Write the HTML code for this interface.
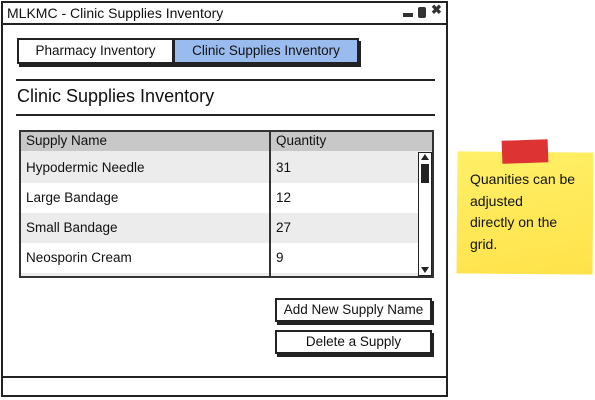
<!DOCTYPE html>
<html><head><meta charset="utf-8"><style>
*{margin:0;padding:0;box-sizing:border-box}
body{width:595px;height:400px;background:#fff;position:relative;overflow:hidden;font-family:"Comic Sans MS","Liberation Sans",sans-serif;color:#111;font-size:13.5px}
.a{position:absolute}
.win{left:1px;top:1px;width:447px;height:396px;border:2px solid #222}
.tb{left:1px;top:1px;width:447px;height:24px;border-bottom:2px solid #222}
.t{white-space:nowrap}
.tab{height:26px;border:2px solid #222;box-shadow:2px 3px 0 #222;line-height:22px;text-align:center}
.hr{left:16px;width:419px;height:2px;background:#222}
.btn{left:275px;width:157px;height:24px;border:2px solid #222;box-shadow:2px 3px 0 #222;text-align:center;line-height:20px;background:#fff}
</style></head><body>
<div class="a win"></div>
<div class="a tb"></div>
<div class="a t" style="left:7px;top:5px;font-size:14px">MLKMC - Clinic Supplies Inventory</div>
<div class="a" style="left:403px;top:13px;width:10px;height:4px;background:#333"></div>
<div class="a" style="left:418px;top:7px;width:8px;height:11px;background:#333;border-radius:2px"></div>
<div class="a t" style="left:431px;top:2px;font-size:13px;font-weight:bold;color:#333">✖</div>

<div class="a tab" style="left:17px;top:38px;width:157px;background:#fff;font-size:13.5px">Pharmacy Inventory</div>
<div class="a tab" style="left:173px;top:38px;width:186px;background:#99bbee;font-size:13.5px">Clinic Supplies Inventory</div>

<div class="a hr" style="top:79px"></div>
<div class="a t" style="left:17px;top:86px;font-size:18px">Clinic Supplies Inventory</div>
<div class="a hr" style="top:114px"></div>

<div class="a" style="left:19px;top:130px;width:415px;height:148px;border:2px solid #333;background:#ececec"></div>
<div class="a" style="left:21px;top:132px;width:411px;height:19px;background:#c8c8c8"></div>
<div class="a" style="left:21px;top:183px;width:397px;height:30px;background:#fff"></div>
<div class="a" style="left:21px;top:243px;width:397px;height:30px;background:#fff"></div>
<div class="a" style="left:269px;top:132px;width:2px;height:144px;background:#333"></div>
<div class="a t" style="left:26px;top:133px">Supply Name</div>
<div class="a t" style="left:276px;top:133px">Quantity</div>
<div class="a t" style="left:26px;top:160px">Hypodermic Needle</div><div class="a t" style="left:276px;top:160px">31</div>
<div class="a t" style="left:26px;top:190px">Large Bandage</div><div class="a t" style="left:276px;top:190px">12</div>
<div class="a t" style="left:26px;top:220px">Small Bandage</div><div class="a t" style="left:276px;top:220px">27</div>
<div class="a t" style="left:26px;top:250px">Neosporin Cream</div><div class="a t" style="left:276px;top:250px">9</div>
<div class="a" style="left:418px;top:152px;width:14px;height:124px;border:1.5px solid #222;background:#fff"></div>
<div class="a" style="left:421px;top:164px;width:8px;height:19px;background:#222"></div>
<div class="a" style="left:421px;top:154px;width:0;height:0;border-left:4px solid transparent;border-right:4px solid transparent;border-bottom:6px solid #222"></div>
<div class="a" style="left:421px;top:267px;width:0;height:0;border-left:4px solid transparent;border-right:4px solid transparent;border-top:6px solid #222"></div>

<div class="a btn" style="top:298px">Add New Supply Name</div>
<div class="a btn" style="top:330px">Delete a Supply</div>

<div class="a" style="left:1px;top:376px;width:447px;height:2px;background:#222"></div>

<div class="a" style="left:457px;top:152px;width:136px;height:122px;background:linear-gradient(170deg,#fff068,#ffe24a);transform:rotate(0.5deg)"></div>
<div class="a" style="left:502px;top:140px;width:46px;height:23px;background:#dd3333;transform:rotate(-2deg)"></div>
<div class="a t" style="left:470px;top:169px;font-size:14px;line-height:21.5px">Quanities can be<br>adjusted<br>directly on the<br>grid.</div>
</body></html>
